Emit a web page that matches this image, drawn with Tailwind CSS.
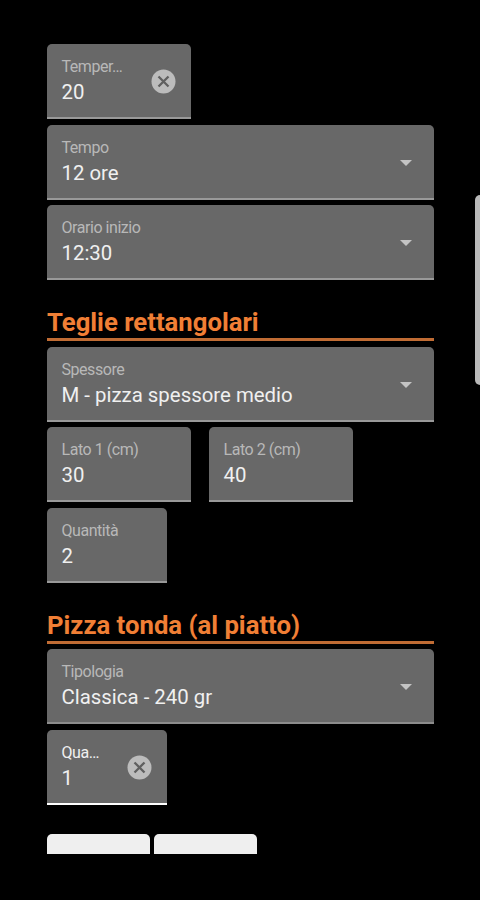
<!DOCTYPE html>
<html lang="it">
<head>
<meta charset="utf-8">
<title>Calcolo impasto</title>
<script src="https://cdn.jsdelivr.net/npm/@tailwindcss/browser@4"></script>
</head>
<body class="bg-black">
<main class="relative flex h-[900px] w-[480px] flex-col overflow-hidden bg-black pl-[47px] pr-[46px] pt-[44px] font-[Roboto,sans-serif] text-[#f0f0f0]">
  <section class="flex flex-col gap-[5.5px]">
    <div class="flex h-[75px] w-[144px] items-center justify-between rounded-t-[5px] border-b-2 border-[#999] bg-[#686868] pl-[14.5px] pr-[15px]">
      <div class="h-full pt-[13px]">
        <div class="text-[16px] leading-[20px] tracking-[-0.45px] text-[#b8b8b8]">Temper…</div>
        <div class="pt-[2px] text-[20.4px] leading-[26px]">20</div>
      </div>
      <svg class="mt-[2px] size-[25px]" viewBox="0 0 25 25"><circle cx="12.5" cy="12.5" r="12" fill="#bcbcbc"/><path d="M7.5 7.5l10 10M17.5 7.5l-10 10" stroke="#606060" stroke-width="2.3"/></svg>
    </div>
    <div class="flex h-[75px] items-center justify-between rounded-t-[5px] border-b-2 border-[#999] bg-[#686868] pl-[14.5px] pr-[22px]">
      <div class="h-full pt-[13px]">
        <div class="text-[16px] leading-[20px] tracking-[-0.45px] text-[#b8b8b8]">Tempo</div>
        <div class="pt-[2px] text-[20.4px] leading-[26px]">12 ore</div>
      </div>
      <svg class="mt-[3px] h-[6px] w-[12px]" viewBox="0 0 12 6"><path d="M0 0h12L6 6z" fill="#c4c4c4"/></svg>
    </div>
    <div class="flex h-[75px] items-center justify-between rounded-t-[5px] border-b-2 border-[#999] bg-[#686868] pl-[14.5px] pr-[22px]">
      <div class="h-full pt-[13px]">
        <div class="text-[16px] leading-[20px] tracking-[-0.45px] text-[#b8b8b8]">Orario inizio</div>
        <div class="pt-[2px] text-[20.4px] leading-[26px]">12:30</div>
      </div>
      <svg class="mt-[3px] h-[6px] w-[12px]" viewBox="0 0 12 6"><path d="M0 0h12L6 6z" fill="#c4c4c4"/></svg>
    </div>
  </section>

  <h2 class="mt-[27px] h-[34px] border-b-3 border-[#c06c34] text-[25.7px] leading-[30px] font-bold text-[#f17f35]">Teglie rettangolari</h2>
  <section class="mt-[5.5px] flex flex-col gap-[5.5px]">
    <div class="flex h-[75px] items-center justify-between rounded-t-[5px] border-b-2 border-[#999] bg-[#686868] pl-[14.5px] pr-[22px]">
      <div class="h-full pt-[13px]">
        <div class="text-[16px] leading-[20px] tracking-[-0.45px] text-[#b8b8b8]">Spessore</div>
        <div class="pt-[2px] text-[20.4px] leading-[26px]">M - pizza spessore medio</div>
      </div>
      <svg class="mt-[3px] h-[6px] w-[12px]" viewBox="0 0 12 6"><path d="M0 0h12L6 6z" fill="#c4c4c4"/></svg>
    </div>
    <div class="flex gap-[18px]">
      <div class="h-[75px] w-[144px] rounded-t-[5px] border-b-2 border-[#999] bg-[#686868] px-[14.5px] pt-[13px]">
        <div class="text-[16px] leading-[20px] tracking-[-0.45px] text-[#b8b8b8]">Lato 1 (cm)</div>
        <div class="pt-[2px] text-[20.4px] leading-[26px]">30</div>
      </div>
      <div class="h-[75px] w-[144px] rounded-t-[5px] border-b-2 border-[#999] bg-[#686868] px-[14.5px] pt-[13px]">
        <div class="text-[16px] leading-[20px] tracking-[-0.45px] text-[#b8b8b8]">Lato 2 (cm)</div>
        <div class="pt-[2px] text-[20.4px] leading-[26px]">40</div>
      </div>
    </div>
    <div class="h-[75px] w-[120px] rounded-t-[5px] border-b-2 border-[#999] bg-[#686868] px-[14.5px] pt-[13px]">
      <div class="text-[16px] leading-[20px] tracking-[-0.45px] text-[#b8b8b8]">Quantità</div>
      <div class="pt-[2px] text-[20.4px] leading-[26px]">2</div>
    </div>
  </section>

  <h2 class="mt-[27px] h-[34px] border-b-3 border-[#c06c34] text-[25.7px] leading-[30px] font-bold text-[#f17f35]">Pizza tonda (al piatto)</h2>
  <section class="mt-[5.5px] flex flex-col gap-[5.5px]">
    <div class="flex h-[75px] items-center justify-between rounded-t-[5px] border-b-2 border-[#8c8c8c] bg-[#686868] pl-[14.5px] pr-[22px]">
      <div class="h-full pt-[13px]">
        <div class="text-[16px] leading-[20px] tracking-[-0.45px] text-[#b8b8b8]">Tipologia</div>
        <div class="pt-[2px] text-[20.4px] leading-[26px]">Classica - 240 gr</div>
      </div>
      <svg class="mt-[3px] h-[6px] w-[12px]" viewBox="0 0 12 6"><path d="M0 0h12L6 6z" fill="#c4c4c4"/></svg>
    </div>
    <div class="flex h-[75px] w-[120px] items-center justify-between rounded-t-[5px] border-b-2 border-white bg-[#686868] pl-[14.5px] pr-[15px]">
      <div class="h-full pt-[13px]">
        <div class="text-[16px] leading-[20px] tracking-[-0.45px]">Qua…</div>
        <div class="pt-[2px] text-[20.4px] leading-[26px]">1</div>
      </div>
      <svg class="mt-[2px] size-[25px]" viewBox="0 0 25 25"><circle cx="12.5" cy="12.5" r="12" fill="#bcbcbc"/><path d="M7.5 7.5l10 10M17.5 7.5l-10 10" stroke="#606060" stroke-width="2.3"/></svg>
    </div>
  </section>

  <div class="mt-[29.5px] flex gap-[4px]">
    <div class="h-[20px] w-[103px] rounded-t-[5px] bg-[#efefef]"></div>
    <div class="h-[20px] w-[103px] rounded-t-[5px] bg-[#efefef]"></div>
  </div>

  <div class="absolute top-[195px] right-0 h-[190px] w-[5px] rounded-l-[5px] bg-[#b9b9b9]"></div>
</main>
</body>
</html>
